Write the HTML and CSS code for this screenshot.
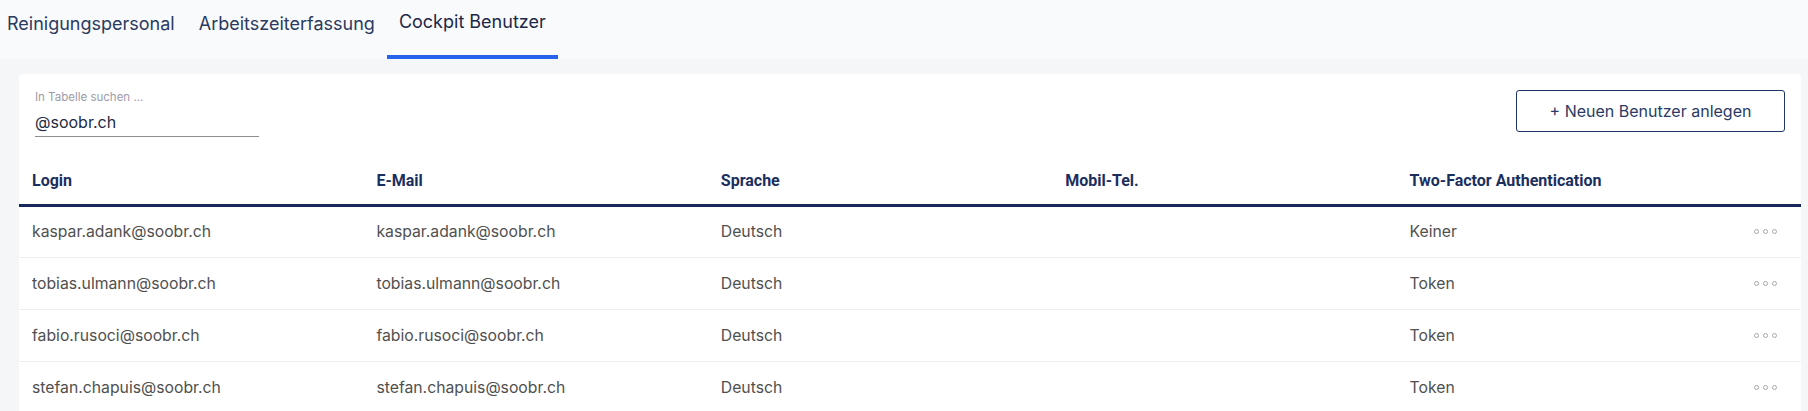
FILE: index.html
```html
<!DOCTYPE html>
<html lang="de">
<head>
<meta charset="utf-8">
<title>Cockpit Benutzer</title>
<link rel="stylesheet" href="styles.css">
</head>
<body>
<header class="topbar">
  <nav class="tabs">
    <a class="tab">Reinigungspersonal</a>
    <a class="tab">Arbeitszeiterfassung</a>
    <a class="tab active">Cockpit Benutzer</a>
  </nav>
</header>
<main class="page">
  <section class="card">
    <div class="toolbar">
      <label class="search">
        <span class="search-label">In Tabelle suchen ...</span>
        <span class="search-value">@soobr.ch</span>
      </label>
      <button class="btn-new">+ Neuen Benutzer anlegen</button>
    </div>
    <table class="users">
      <thead>
        <tr>
          <th>Login</th>
          <th>E-Mail</th>
          <th>Sprache</th>
          <th>Mobil-Tel.</th>
          <th>Two-Factor Authentication</th>
          <th class="act"></th>
        </tr>
      </thead>
      <tbody>
        <tr>
          <td>kaspar.adank@soobr.ch</td>
          <td>kaspar.adank@soobr.ch</td>
          <td>Deutsch</td>
          <td></td>
          <td>Keiner</td>
          <td class="act"><span class="dots"><i></i><i></i><i></i></span></td>
        </tr>
        <tr>
          <td>tobias.ulmann@soobr.ch</td>
          <td>tobias.ulmann@soobr.ch</td>
          <td>Deutsch</td>
          <td></td>
          <td>Token</td>
          <td class="act"><span class="dots"><i></i><i></i><i></i></span></td>
        </tr>
        <tr>
          <td>fabio.rusoci@soobr.ch</td>
          <td>fabio.rusoci@soobr.ch</td>
          <td>Deutsch</td>
          <td></td>
          <td>Token</td>
          <td class="act"><span class="dots"><i></i><i></i><i></i></span></td>
        </tr>
        <tr>
          <td>stefan.chapuis@soobr.ch</td>
          <td>stefan.chapuis@soobr.ch</td>
          <td>Deutsch</td>
          <td></td>
          <td>Token</td>
          <td class="act"><span class="dots"><i></i><i></i><i></i></span></td>
        </tr>
      </tbody>
    </table>
  </section>
</main>
</body>
</html>
```
FILE: styles.css
```css
* { box-sizing: border-box; }
html, body {
  margin: 0;
  padding: 0;
  background: #f5f6f8;
  font-family: Inter, "Noto Sans", sans-serif;
}
.topbar {
  background: #f9fafc;
  height: 59px;
}
.tabs {
  display: flex;
  margin-left: -5px;
  height: 100%;
}
.tab {
  padding: 12px 12px 0;
  font-size: 18px;
  color: #2b3a5e;
  border-bottom: 4px solid transparent;
  line-height: 24px;
}
.tab.active {
  padding-top: 10px;
  color: #1c2849;
  border-bottom-color: #2563eb;
}
.page {
  padding: 15px 7px 0 19px;
}
.card {
  background: #fff;
  border-radius: 4px 4px 0 0;
}
.toolbar {
  display: flex;
  justify-content: space-between;
  align-items: flex-start;
  padding: 16px 16px 0 16px;
  height: 76px;
}
.search {
  display: flex;
  flex-direction: column;
  width: 224px;
  border-bottom: 1px solid #8f8f8f;
}
.search-label {
  font-size: 11.5px;
  line-height: 14px;
  color: #9d9ba8;
  margin-bottom: 5px;
}
.search-value {
  font-size: 16px;
  line-height: 26px;
  color: #222a44;
  padding-bottom: 1px;
}
.btn-new {
  width: 269px;
  height: 42px;
  border: 1px solid #1f3566;
  border-radius: 3px;
  background: #fff;
  font-family: Inter, "Noto Sans", sans-serif;
  font-size: 16px;
  color: #2a3a66;
}
.users {
  width: 100%;
  border-collapse: collapse;
  table-layout: fixed;
}
.users th {
  text-align: left;
  font-family: Roboto, "Liberation Sans", sans-serif;
  font-weight: 700;
  font-size: 16px;
  color: #1b2f5e;
  padding: 7px 13px 0;
  height: 55px;
  border-bottom: 3px solid #17295a;
}
.users th.act, .users td.act { width: 60px; }
.users td {
  padding: 0 13px;
  height: 52px;
  font-size: 15.75px;
  color: #505050;
  border-bottom: 1px solid #efeff1;
}
.dots {
  display: flex;
  align-items: center;
  gap: 4px;
}
.dots i {
  width: 5px;
  height: 5px;
  border: 1px solid #a8a8a8;
  border-radius: 50%;
}
```
